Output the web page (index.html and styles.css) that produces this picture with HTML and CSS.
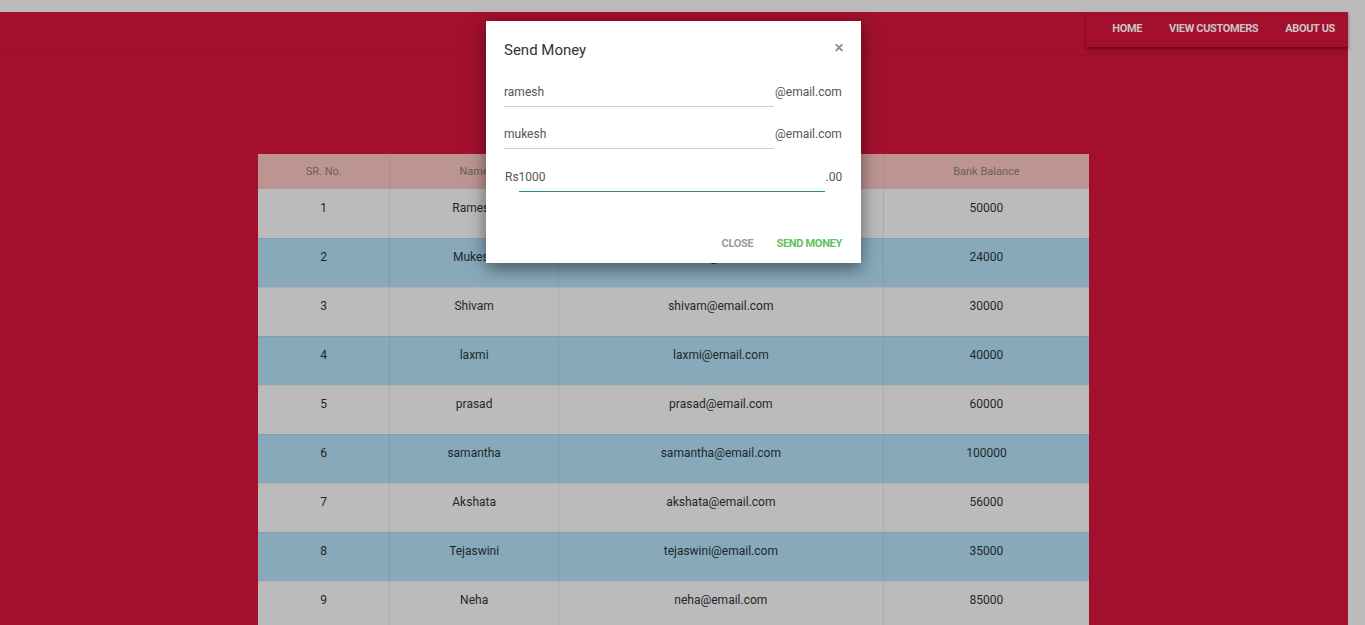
FILE: index.html
```html
<!DOCTYPE html>
<html lang="en">
<head>
<meta charset="utf-8">
<title>Customers</title>
<link rel="stylesheet" href="styles.css">
</head>
<body>
<div class="page">
  <header class="navbar">
    <ul class="nav-links">
      <li><a href="#">HOME</a></li>
      <li><a href="#">VIEW CUSTOMERS</a></li>
      <li><a href="#">ABOUT US</a></li>
    </ul>
  </header>
  <main class="content">
    <table class="customers">
      <thead>
        <tr><th class="c1">SR. No.</th><th class="c2">Name</th><th class="c3">Email</th><th class="c4">Bank Balance</th></tr>
      </thead>
      <tbody>
        <tr><td>1</td><td>Ramesh</td><td>ramesh@email.com</td><td>50000</td></tr>
        <tr><td>2</td><td>Mukesh</td><td>mukesh@email.com</td><td>24000</td></tr>
        <tr><td>3</td><td>Shivam</td><td>shivam@email.com</td><td>30000</td></tr>
        <tr><td>4</td><td>laxmi</td><td>laxmi@email.com</td><td>40000</td></tr>
        <tr><td>5</td><td>prasad</td><td>prasad@email.com</td><td>60000</td></tr>
        <tr><td>6</td><td>samantha</td><td>samantha@email.com</td><td>100000</td></tr>
        <tr><td>7</td><td>Akshata</td><td>akshata@email.com</td><td>56000</td></tr>
        <tr><td>8</td><td>Tejaswini</td><td>tejaswini@email.com</td><td>35000</td></tr>
        <tr><td>9</td><td>Neha</td><td>neha@email.com</td><td>85000</td></tr>
      </tbody>
    </table>
  </main>
</div>

<div class="overlay">
  <div class="modal">
    <div class="modal-head">
      <h2>Send Money</h2>
      <span class="close-x">&#x2715;</span>
    </div>
    <div class="field">
      <span class="input">ramesh</span>
      <span class="suffix">@email.com</span>
    </div>
    <div class="field">
      <span class="input">mukesh</span>
      <span class="suffix">@email.com</span>
    </div>
    <div class="field amount">
      <span class="prefix">Rs</span>
      <span class="input focused">1000</span>
      <span class="suffix">.00</span>
    </div>
    <div class="modal-actions">
      <a href="#" class="btn btn-close">CLOSE</a>
      <a href="#" class="btn btn-send">SEND MONEY</a>
    </div>
  </div>
</div>
</body>
</html>
```

FILE: styles.css
```css
html, body {
  margin: 0;
  padding: 0;
}
body {
  background: #bbbbbb;
  font-family: Roboto, "Liberation Sans", sans-serif;
  height: 625px;
  overflow: hidden;
}
.page {
  width: 1348px;
  margin-top: 12px;
  background: #a3102d;
  height: 613px;
}
.navbar {
  height: 42px;
  border-bottom: 1px solid #950e29;
  display: flex;
  justify-content: flex-end;
  align-items: flex-start;
}
.nav-links {
  list-style: none;
  margin: 0;
  padding: 0 0 2px 12px;
  height: 35px;
  box-sizing: border-box;
  display: flex;
  align-items: center;
  box-shadow: 0 2px 3px rgba(60, 0, 10, 0.55);
}
.nav-links li a {
  display: block;
  padding: 0 13px 0 14px;
  color: #c9c4c6;
  font-size: 11px;
  font-weight: 700;
  letter-spacing: -0.35px;
  text-decoration: none;
}
.content {
  display: flex;
  justify-content: center;
  padding-top: 99px;
  padding-right: 1px;
}
.customers {
  width: 831px;
  border-collapse: collapse;
  font-size: 12px;
  color: #1e272c;
}
.customers th {
  height: 35px;
  padding: 0;
  background: #bc9592;
  color: #6d5d5c;
  font-size: 11px;
  font-weight: 400;
  text-align: center;
  border-left: 1px solid #b38b88;
}
.customers th:first-child, .customers td:first-child {
  border-left: none;
}
.c1 { width: 132px; }
.c2 { width: 168px; }
.c3 { width: 325px; }
.c4 { width: 206px; }
.customers td {
  height: 49px;
  box-sizing: border-box;
  padding: 11px 0 0;
  vertical-align: top;
  text-align: center;
  border-left: 1px solid rgba(0, 0, 0, 0.07);
  border-top: 1px solid rgba(0, 0, 0, 0.05);
}
.customers tbody tr:first-child td {
  border-top: none;
  padding-top: 12px;
}
.customers tbody tr:nth-child(odd) td {
  background: #bbbbbb;
}
.customers tbody tr:nth-child(even) td {
  background: #87a9b9;
}

.overlay {
  position: absolute;
  top: 0;
  left: 0;
  width: 1348px;
  box-sizing: border-box;
  padding-right: 1px;
  display: flex;
  justify-content: center;
  padding-top: 21px;
}
.modal {
  width: 375px;
  height: 242px;
  box-sizing: border-box;
  background: #ffffff;
  padding: 0 19px 0 18px;
  box-shadow: 0 5px 16px rgba(0, 0, 0, 0.5);
  display: flex;
  flex-direction: column;
}
.modal-head {
  display: flex;
  justify-content: space-between;
  align-items: center;
  height: 57px;
}
.modal-head h2 {
  margin: 0;
  font-size: 15px;
  font-weight: 400;
  color: #333333;
}
.close-x {
  font-size: 12px;
  font-weight: 700;
  color: #8a8a8a;
  margin-top: -3px;
  margin-right: -2px;
}
.field {
  display: flex;
  align-items: flex-start;
  height: 42px;
  font-size: 12px;
  color: #555555;
}
.field .input {
  flex: 0 0 270px;
  height: 29px;
  box-sizing: border-box;
  padding-top: 7px;
  border-bottom: 1px solid #cfcfcf;
}
.field .suffix {
  padding-top: 7px;
  margin-left: 1px;
}
.field.amount {
  margin-top: 1px;
}
.field.amount .prefix {
  width: 14px;
  padding-top: 7px;
  padding-left: 1px;
}
.field.amount .input {
  flex: 0 0 306px;
  border-bottom: 1px solid #2a8a7e;
}
.modal-actions {
  display: flex;
  justify-content: flex-end;
  align-items: center;
  gap: 23px;
  margin-top: 32px;
}
.btn {
  font-size: 11px;
  font-weight: 700;
  text-decoration: none;
  letter-spacing: -0.3px;
}
.btn-close {
  color: #9a9a9a;
}
.btn-send {
  color: #5cc35e;
}
```
